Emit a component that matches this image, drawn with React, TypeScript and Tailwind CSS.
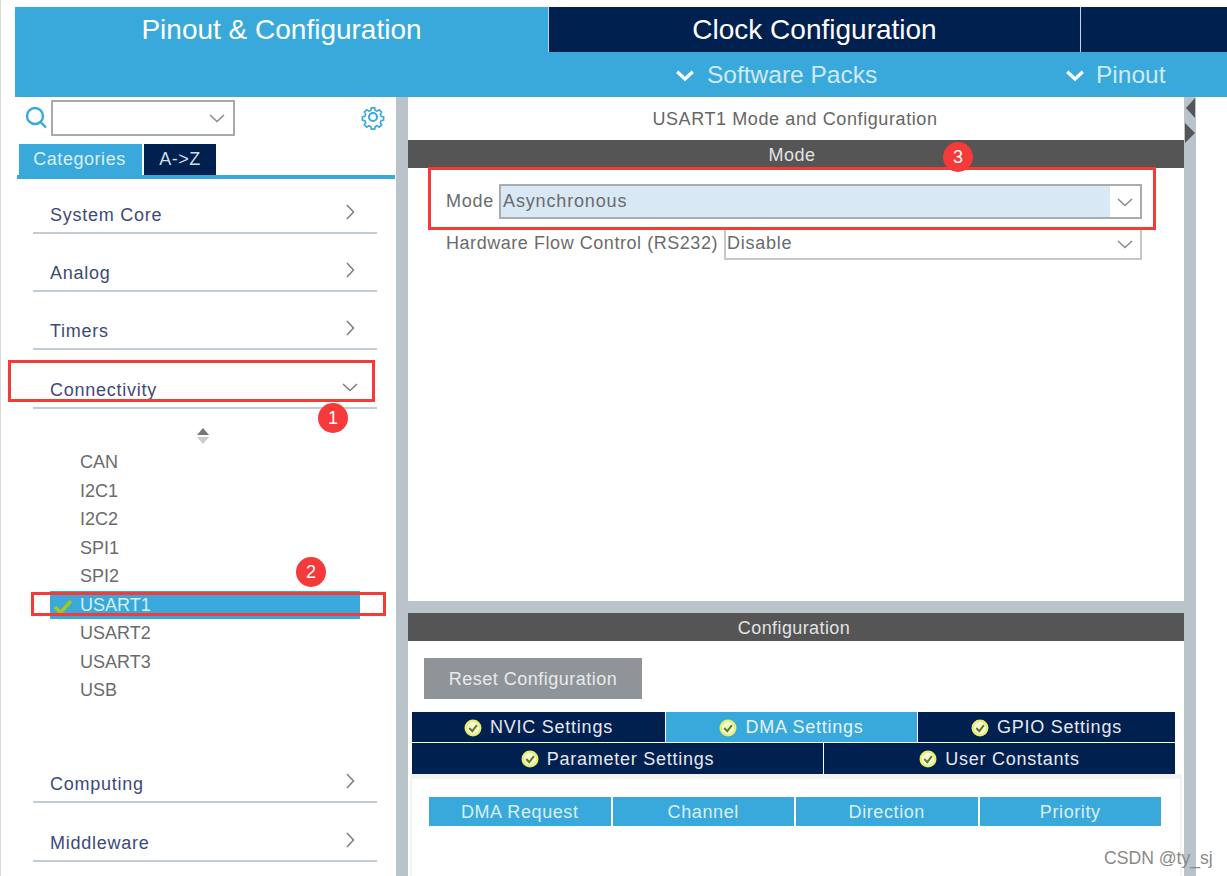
const font = "font-['Liberation_Sans',Arial,sans-serif]";

function Chevron({ dir = 'down', className = '', sw = 1.5, size = 18 }: { dir?: 'down' | 'right'; className?: string; sw?: number; size?: number }) {
  return (
    <svg width={size} height={size} viewBox="0 0 18 18" fill="none" className={className}>
      <path
        d={dir === 'down' ? 'M2 6 L9 12.5 L16 6' : 'M6 2 L12.5 9 L6 16'}
        stroke="currentColor"
        strokeWidth={sw}
      />
    </svg>
  );
}

function Category({ name, open, h = 'h-[58px]' }: { name: string; open?: boolean; h?: string }) {
  return (
    <div className={`ml-[18px] mr-[19px] flex items-end justify-between border-b-2 border-[#c3ccd2] pb-[5px] ${h}`}>
      <span className="pl-[17px] text-[18px] leading-6 tracking-[0.75px] text-[#3c4a78]">{name}</span>
      <Chevron dir={open ? 'down' : 'right'} className="mb-1.5 mr-[18px] text-[#7d7d7d]" />
    </div>
  );
}

function Peripheral({ name, active }: { name: string; active?: boolean }) {
  return (
    <div className={`flex h-[28.5px] w-[310px] items-center pl-[30px] pt-px text-[18px] ${active ? 'relative bg-[#39a9dc] text-[#d6eef8]' : 'text-[#6b6b6b]'}`}>
      {active && (
        <svg width="20" height="16" viewBox="0 0 20 16" className="absolute left-[3px] top-[8px]">
          <path d="M2 8 L7.5 13.5 L18 2" stroke="#a5c81e" strokeWidth="3.5" fill="none" />
        </svg>
      )}
      {name}
    </div>
  );
}

function TabCheck() {
  return (
    <svg width="18" height="18" viewBox="0 0 17 17" className="shrink-0">
      <circle cx="8.5" cy="8.5" r="8" fill="#e6ef6e" />
      <circle cx="8.5" cy="8.5" r="5.8" fill="#f4f6d8" />
      <path d="M5 8.5 L7.8 11.5 L12.2 5.8" stroke="#5f7d14" strokeWidth="1.8" fill="none" />
    </svg>
  );
}

function SettingTab({ label, active, className = '' }: { label: string; active?: boolean; className?: string }) {
  return (
    <div className={`flex items-center justify-center gap-2 pt-px text-[18px] tracking-[0.75px] ${active ? 'bg-[#39a9dc] text-[#e3f3fa]' : 'bg-[#002050] text-[#e6e9ee]'} ${className}`}>
      <TabCheck />
      {label}
    </div>
  );
}

function Badge({ n, className }: { n: number; className: string }) {
  return (
    <div className={`absolute flex h-[30px] w-[30px] items-center justify-center rounded-full bg-[#f53a3a] text-[18px] text-white ${className}`}>
      {n}
    </div>
  );
}

export default function App() {
  return (
    <div className={`relative h-[876px] w-[1227px] overflow-hidden bg-white pt-[7px] ${font}`}>
      <div className="absolute left-0 top-0 h-full w-px bg-[#d8d8d8]" />

      {/* top bars */}
      <div className="ml-[15px]">
        <div className="flex h-[45px] bg-[#002050] text-[28px] text-white">
          <div className="flex w-[533px] items-center justify-center bg-[#39a9dc] pt-px">Pinout &amp; Configuration</div>
          <div className="flex w-[532px] items-center justify-center border-l border-[#c9d2da] pt-px">Clock Configuration</div>
          <div className="flex-1 border-l border-[#c9d2da]" />
        </div>
        <div className="flex h-[45px] items-center bg-[#39a9dc] pt-px text-[24.5px] text-[#cfeaf6]">
          <div className="ml-[660px] flex w-[390px] items-center gap-[12px]">
            <Chevron className="text-white" sw={3} size={20} />
            Software Packs
          </div>
          <div className="flex items-center gap-[11px]">
            <Chevron className="text-white" sw={3} size={20} />
            Pinout
          </div>
        </div>
      </div>

      <div className="ml-[15px] flex h-[779px]">
        {/* left panel */}
        <div className="w-[381px] shrink-0">
          <div className="flex h-[47px] items-center pb-1.5 pl-[10px]">
            <svg width="22" height="24" viewBox="0 0 22 24" fill="none" stroke="#39a9dc" strokeWidth="2.4">
              <circle cx="10" cy="10" r="8" />
              <path d="M15.5 16 L21 21.5" />
            </svg>
            <div className="ml-[4px] flex h-[36px] w-[184px] items-center justify-end border-2 border-[#a9a9a9] pr-[7px] text-[#8a8a8a]">
              <Chevron />
            </div>
            <svg width="26" height="26" viewBox="0 0 26 26" fill="none" stroke="#39a9dc" strokeWidth="2" className="mb-[2px] ml-[125px]">
              <circle cx="13" cy="13" r="4" />
              <path d="M11 2h4l.6 3 2.4 1 2.6-1.6 2.8 2.8-1.6 2.6 1 2.4 3 .6v4l-3 .6-1 2.4 1.6 2.6-2.8 2.8-2.6-1.6-2.4 1-.6 3h-4l-.6-3-2.4-1-2.6 1.6-2.8-2.8 1.6-2.6-1-2.4-3-.6v-4l3-.6 1-2.4-1.6-2.6 2.8-2.8 2.6 1.6 2.4-1z" transform="translate(2.2 2.2) scale(.83)" />
            </svg>
          </div>
          <div className="ml-[4px] flex h-[31px] text-[18px] tracking-[0.55px]">
            <div className="flex w-[123px] items-center justify-center bg-[#39a9dc] pr-[2px] text-[#d9eff9]">Categories</div>
            <div className="ml-[2px] flex w-[72px] items-center justify-center bg-[#002050] text-[#d5dbe6]">A-&gt;Z</div>
          </div>
          <div className="ml-[2px] mr-[1px] h-[4px] bg-[#39a9dc]" />

          <Category name="System Core" h="h-[55px]" />
          <Category name="Analog" />
          <Category name="Timers" />
          <Category name="Connectivity" open h="h-[59px]" />

          <div className="flex h-[39px] items-center justify-center pr-[6px] pt-[14px]">
            <svg width="14" height="18" viewBox="0 0 14 18">
              <path d="M7 1 L13 8 H1 Z" fill="#777" />
              <path d="M7 17 L13 10 H1 Z" fill="#ccc" />
            </svg>
          </div>
          <div className="ml-[35px]">
            <Peripheral name="CAN" />
            <Peripheral name="I2C1" />
            <Peripheral name="I2C2" />
            <Peripheral name="SPI1" />
            <Peripheral name="SPI2" />
            <Peripheral name="USART1" active />
            <Peripheral name="USART2" />
            <Peripheral name="USART3" />
            <Peripheral name="USB" />
          </div>
          <div className="h-[36px]" />
          <Category name="Computing" h="h-[62px]" />
          <Category name="Middleware" h="h-[59px]" />
        </div>

        {/* splitter */}
        <div className="w-[12px] shrink-0 bg-[#b8c4ca]" />

        {/* right panel */}
        <div className="flex w-[776px] shrink-0 flex-col bg-[#b8c4ca]">
          <div className="h-[504px] bg-white">
            <div className="flex h-[43px] items-center justify-center pt-px pr-[2px] text-[18px] tracking-[0.6px] text-[#666]">USART1 Mode and Configuration</div>
            <div className="flex h-[28px] items-center justify-center bg-[#545554] pr-[8px] pt-[2px] text-[18px] tracking-[0.5px] text-[#e3e3e3]">Mode</div>
            <div className="box-content flex h-[33px] items-center pl-[38px] pr-[42px] pt-[17px] text-[18px] tracking-[0.75px] text-[#6b6b6b]">
              <span className="mr-[5px]">Mode</span>
              <div className="flex h-[35px] flex-1 items-center border-2 border-[#a9adb0] bg-white">
                <div className="flex h-full flex-1 items-center bg-[#d8e8f5] pl-[2px] tracking-[0.85px]">Asynchronous</div>
                <Chevron className="mx-[6px] text-[#8a8a8a]" />
              </div>
            </div>
            <div className="mt-[9px] flex h-[33px] items-center pl-[38px] pr-[42px] text-[18px] tracking-[0.55px] text-[#6b6b6b]">
              <span className="mr-[6px] whitespace-nowrap">Hardware Flow Control (RS232)</span>
              <div className="flex h-[33px] flex-1 items-center justify-between border-2 border-[#c4c8cb] pl-px tracking-[0.75px]">
                Disable
                <Chevron className="mx-[6px] text-[#8a8a8a]" />
              </div>
            </div>
          </div>

          <div className="mt-[12px] flex-1 bg-white">
            <div className="flex h-[28px] items-center justify-center bg-[#545554] pr-[4px] pt-[2px] text-[18px] tracking-[0.4px] text-[#e3e3e3]">Configuration</div>
            <div className="ml-[16px] mt-[17px] flex h-[41px] w-[218px] items-center justify-center bg-[#8f9499] pt-px text-[18px] tracking-[0.5px] text-[#e8eaeb]">Reset Configuration</div>
            <div className="ml-[4px] mr-[9px] mt-[13px]">
              <div className="flex h-[30px]">
                <SettingTab label="NVIC Settings" className="w-[253px]" />
                <SettingTab label="DMA Settings" active className="relative z-10 w-[252px] border-l border-white" />
                <SettingTab label="GPIO Settings" className="flex-1 border-l border-white" />
              </div>
              <div className="mt-px flex h-[31px]">
                <SettingTab label="Parameter Settings" className="w-[411px]" />
                <SettingTab label="User Constants" className="flex-1 border-l border-white" />
              </div>
            </div>
            <div className="mx-[2px] h-full bg-[#f1f2f4] pt-[5px]">
              <div className="mx-[2px] h-full bg-white pt-[18px]">
                <div className="ml-[17px] flex w-[732px] gap-[2px] text-[18px] tracking-[0.6px] text-[#d9eff9]">
                  {['DMA Request', 'Channel', 'Direction', 'Priority'].map((h) => (
                    <div key={h} className="flex h-[29px] flex-1 items-center justify-center bg-[#39a9dc] pt-px">{h}</div>
                  ))}
                </div>
              </div>
            </div>
          </div>
        </div>

        {/* right splitter with collapse arrows */}
        <div className="w-[12px] shrink-0 bg-[#b8c4ca]">
          <svg width="12" height="48" viewBox="0 0 12 48" className="block">
            <path d="M11 1 L2 11 L11 21 Z" fill="#555" />
            <path d="M1 26 L11 36 L1 46 Z" fill="#555" />
          </svg>
        </div>
      </div>

      {/* annotations */}
      <div className="absolute left-[8px] top-[360px] h-[42px] w-[367px] border-[3px] border-[#f53a3a]" />
      <div className="absolute left-[31px] top-[592px] h-[24px] w-[355px] border-[3px] border-[#f53a3a]" />
      <div className="absolute left-[428px] top-[167px] h-[63px] w-[728px] border-[3px] border-[#f53a3a]" />
      <Badge n={1} className="left-[318px] top-[403px]" />
      <Badge n={2} className="left-[296px] top-[557px]" />
      <Badge n={3} className="left-[943px] top-[142px]" />
      <div className="absolute left-[1104px] top-[845px] text-[17.6px] text-[#8a8a8a]">CSDN @ty_sj</div>
    </div>
  );
}
